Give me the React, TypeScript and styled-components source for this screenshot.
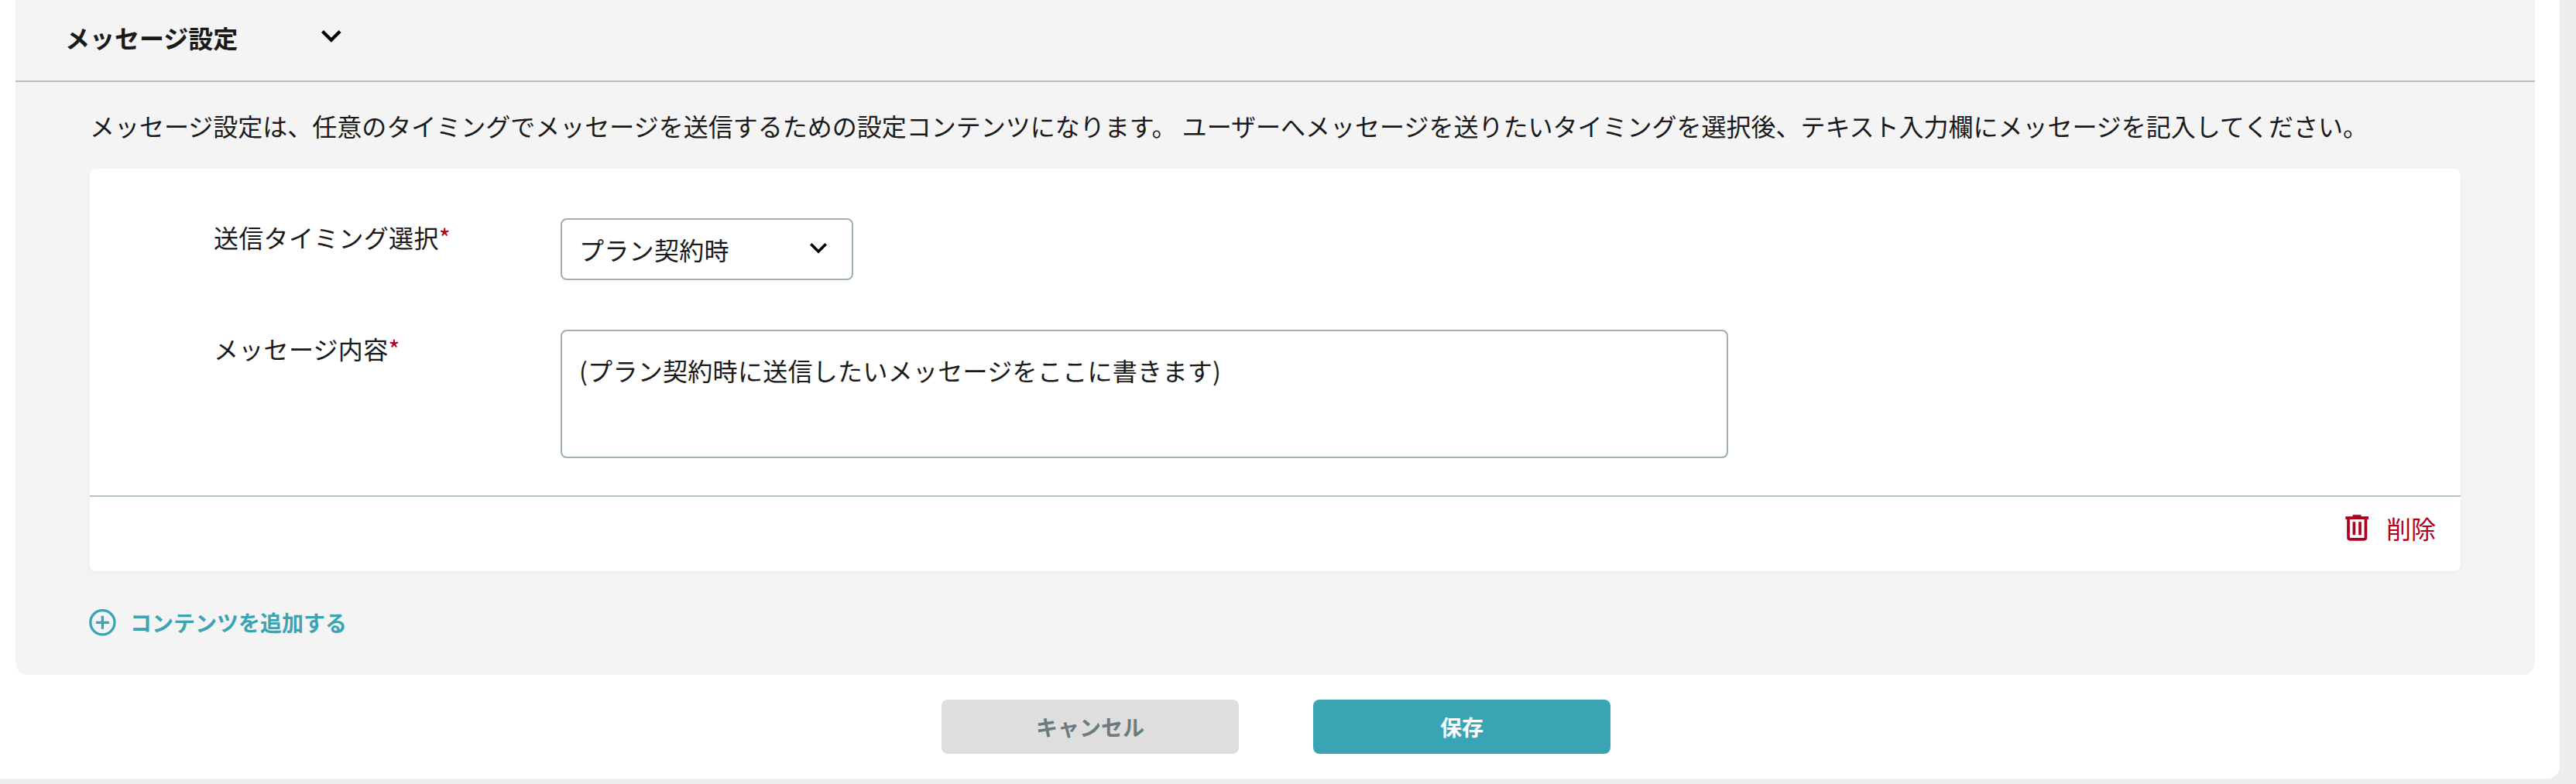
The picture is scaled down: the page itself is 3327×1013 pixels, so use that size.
import React from "react";
import styled, { createGlobalStyle } from "styled-components";

const GlobalStyle = createGlobalStyle`
  *, *::before, *::after { box-sizing: border-box; }
  html, body { margin: 0; padding: 0; }
  body {
    height: 1013px;
    overflow: hidden;
    background: #eeeeee;
    color: #1a1a1a;
    font-family: "Noto Sans CJK JP", "Noto Sans", sans-serif;
    font-size: 32px;
    line-height: 48px;
  }
  button, textarea { font: inherit; color: inherit; }
`;

const Page = styled.main`
  width: 3318px;
  height: 1018px;
  margin: -12px 0 0 -12px;
  padding: 0 32px;
  background: #ffffff;
  border-radius: 16px;
`;

const Panel = styled.section`
  height: 884px;
  background: #f4f4f4;
  border-radius: 16px;
`;

const PanelHeader = styled.header`
  display: flex;
  align-items: center;
  height: 118px;
  padding: 4px 64px 0;
  border-bottom: 2px solid #b1c3c3;
`;

const Title = styled.h2`
  width: 331px;
  margin: 0;
  font-size: 32px;
  font-weight: 700;
`;

const PanelBody = styled.div`
  padding: 32px 96px 0;
`;

const Description = styled.p`
  margin: 0 0 32px;
  white-space: nowrap;
`;

const Card = styled.div`
  height: 520px;
  background: #ffffff;
  border-radius: 8px;
  box-shadow: 0 2px 8px rgba(0, 0, 0, 0.04);
`;

const CardFields = styled.div`
  display: flex;
  flex-direction: column;
  gap: 64px;
  height: 424px;
  padding: 64px 160px 0;
  border-bottom: 2px solid #b1c3c3;
`;

const Field = styled.div`
  display: grid;
  grid-template-columns: 448px auto;
  justify-content: start;
  align-items: start;
  letter-spacing: 0.00938em;
`;

const Label = styled.label`
  display: flex;
`;

const Required = styled.span`
  color: #b00020;
`;

const Select = styled.button`
  display: flex;
  align-items: center;
  justify-content: space-between;
  width: 378px;
  height: 80px;
  padding: 0 32px 0 22px;
  background: #ffffff;
  border: 2px solid #9eb0b2;
  border-radius: 8px;
  letter-spacing: inherit;
`;

const MessageBox = styled.textarea`
  display: block;
  width: 1508px;
  height: 166px;
  padding: 26px 22px;
  background: #ffffff;
  border: 2px solid #9eb0b2;
  border-radius: 8px;
  outline: none;
  resize: none;
  letter-spacing: inherit;
`;

const CardFooter = styled.div`
  display: flex;
  justify-content: flex-end;
  padding: 16px 32px;
`;

const DeleteButton = styled.button`
  display: flex;
  align-items: center;
  gap: 23px;
  padding: 0;
  background: none;
  border: 0;
  color: #b00020;
`;

const AddButton = styled.button`
  display: flex;
  align-items: center;
  gap: 18px;
  margin: 42px 0 0 -1px;
  padding: 0;
  background: none;
  border: 0;
  color: #3aa4b5;
  font-size: 28px;
  font-weight: 700;
`;

const Actions = styled.div`
  display: flex;
  justify-content: center;
  gap: 96px;
  padding: 32px 0 0 2px;
`;

const ActionButton = styled.button<{ $primary?: boolean }>`
  width: 384px;
  height: 70px;
  padding: 0;
  border: 0;
  border-radius: 8px;
  background: ${(p) => (p.$primary ? "#3aa4b5" : "#dedede")};
  color: ${(p) => (p.$primary ? "#ffffff" : "#6b7b7e")};
  font-size: 28px;
  font-weight: 700;
`;

const Icon = styled.svg`
  display: block;
  flex: none;
`;

const Chevron = styled(Icon)<{ $size: number }>`
  width: ${(p) => p.$size}px;
  height: ${(p) => p.$size * 0.6175}px;
  margin-top: -2px;
  fill: #000000;
`;

function ChevronDown({ size }: { size: number }) {
  return (
    <Chevron $size={size} viewBox="6 8.59 12 7.41">
      <path d="M16.59 8.59 12 13.17 7.41 8.59 6 10l6 6 6-6z" />
    </Chevron>
  );
}

export default function App() {
  return (
    <>
      <GlobalStyle />
      <Page>
        <Panel>
          <PanelHeader>
            <Title>メッセージ設定</Title>
            <ChevronDown size={25.6} />
          </PanelHeader>
          <PanelBody>
            <Description>
              メッセージ設定は、任意のタイミングでメッセージを送信するための設定コンテンツになります。 ユーザーへメッセージを送りたいタイミングを選択後、テキスト入力欄にメッセージを記入してください。
            </Description>
            <Card>
              <CardFields>
                <Field>
                  <Label>
                    送信タイミング選択<Required>*</Required>
                  </Label>
                  <Select type="button">
                    プラン契約時
                    <ChevronDown size={22} />
                  </Select>
                </Field>
                <Field>
                  <Label htmlFor="message">
                    メッセージ内容<Required>*</Required>
                  </Label>
                  <MessageBox id="message" defaultValue="(プラン契約時に送信したいメッセージをここに書きます)" />
                </Field>
              </CardFields>
              <CardFooter>
                <DeleteButton type="button">
                  <Icon width="30" height="34" viewBox="0 0 30 34" fill="none" stroke="currentColor" strokeWidth="3.7">
                    <path d="M0.3 4.2h29.7M9.5 2h11M4 4v25.6q0 2.2 2.2 2.2h18q2.2 0 2.2-2.2V4M11.4 9.3v17M19 9.3v17" />
                  </Icon>
                  削除
                </DeleteButton>
              </CardFooter>
            </Card>
            <AddButton type="button">
              <Icon width="35" height="35" viewBox="0 0 35 35" fill="none" stroke="currentColor" strokeWidth="3.3">
                <circle cx="17.4" cy="17.3" r="15.6" />
                <path d="M17.4 8.8v17M8.9 17.3h17" />
              </Icon>
              コンテンツを追加する
            </AddButton>
          </PanelBody>
        </Panel>
        <Actions>
          <ActionButton type="button">キャンセル</ActionButton>
          <ActionButton type="button" $primary>
            保存
          </ActionButton>
        </Actions>
      </Page>
    </>
  );
}
